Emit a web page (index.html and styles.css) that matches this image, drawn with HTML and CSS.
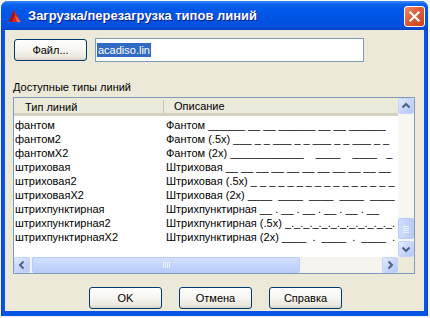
FILE: index.html
```html
<!DOCTYPE html>
<html>
<head>
  <title>Загрузка/перезагрузка типов линий</title>
  <meta charset="utf-8">
  <link rel="stylesheet" href="styles.css">
</head>
<body>
  <div class="window">
    <!-- Title bar -->
    <div class="titlebar">
      <svg class="app-icon" viewBox="0 0 14 14" width="14" height="14">
        <polygon points="1,13 6,1 13,13" fill="#d8261f"></polygon>
        <polygon points="1,13 6,1 7,6 4,13" fill="#a5120e"></polygon>
        <polygon points="7,6 13,13 9,13" fill="#f06a5a"></polygon>
      </svg>
      <span class="title">Загрузка/перезагрузка типов линий</span>
      <div class="close-btn">
        <svg viewBox="0 0 21 21" width="21" height="21">
          <path d="M6 6 L15 15 M15 6 L6 15" stroke="#fff" stroke-width="2.4" stroke-linecap="square"></path>
        </svg>
      </div>
    </div>

    <!-- Dialog body -->
    <div class="client">
      <div class="file-row">
        <div class="btn file-btn">Файл...</div>
        <div class="textbox"><span class="selected">acadiso.lin</span></div>
      </div>

      <div class="group-label">Доступные типы линий</div>

      <div class="listbox">
        <div class="list-main">
          <div class="list-content">
            <div class="list-header">
              <div class="hdr-cell first">Тип линий</div>
              <div class="hdr-cell">Описание</div>
            </div>
            <div class="list-rows">
              <div class="row"><span>фантом</span><span>Фантом ______ __ __ ______ __ __ ______</span></div>
              <div class="row"><span>фантом2</span><span>Фантом (.5x) ___ _ _ ___ _ _ ___ _ _ ___ _ _</span></div>
              <div class="row"><span>фантомX2</span><span>Фантом (2x) ____________    ____    ____   _</span></div>
              <div class="row"><span>штриховая</span><span>Штриховая __ __ __ __ __ __ __ __ __ __ __</span></div>
              <div class="row"><span>штриховая2</span><span>Штриховая (.5x) _ _ _ _ _ _ _ _ _ _ _ _ _ _ _ _</span></div>
              <div class="row"><span>штриховаяX2</span><span>Штриховая (2x) ____  ____  ____  ____  ____</span></div>
              <div class="row"><span>штрихпунктирная</span><span>Штрихпунктирная __ . __ . __ . __ . __ . __</span></div>
              <div class="row"><span>штрихпунктирная2</span><span>Штрихпунктирная (.5x) _._._._._._._._._._._._.</span></div>
              <div class="row"><span>штрихпунктирнаяX2</span><span>Штрихпунктирная (2x) ____  .  ____  .  ____  .</span></div>
            </div>
          </div>
          <!-- Vertical scrollbar -->
          <div class="vscroll">
            <div class="sb-btn">
              <svg viewBox="0 0 16 16" width="16" height="16"><path d="M4.5 9.5 L8 6 L11.5 9.5" class="chev"></path></svg>
            </div>
            <div class="vtrack">
              <div class="sb-thumb vthumb">
                <svg viewBox="0 0 14 8" width="14" height="8"><path d="M4 1.5h6M4 3.5h6M4 5.5h6M4 7.5h6" class="grip"></path></svg>
              </div>
            </div>
            <div class="sb-btn">
              <svg viewBox="0 0 16 16" width="16" height="16"><path d="M4.5 6.5 L8 10 L11.5 6.5" class="chev"></path></svg>
            </div>
          </div>
        </div>
        <!-- Horizontal scrollbar -->
        <div class="hscroll">
          <div class="sb-btn">
            <svg viewBox="0 0 16 16" width="16" height="16"><path d="M9.5 4.5 L6 8 L9.5 11.5" class="chev"></path></svg>
          </div>
          <div class="htrack">
            <div class="sb-thumb hthumb">
              <svg viewBox="0 0 8 14" width="8" height="14"><path d="M1.5 4v6M3.5 4v6M5.5 4v6M7.5 4v6" class="grip"></path></svg>
            </div>
          </div>
          <div class="sb-btn">
            <svg viewBox="0 0 16 16" width="16" height="16"><path d="M6.5 4.5 L10 8 L6.5 11.5" class="chev"></path></svg>
          </div>
          <div class="sb-corner"></div>
        </div>
      </div>

      <div class="button-row">
        <div class="btn">OK</div>
        <div class="btn">Отмена</div>
        <div class="btn">Справка</div>
      </div>
    </div>
  </div>
</body>
</html>
```

FILE: styles.css
```css
/* Base */
html, body {
  margin: 0;
  padding: 0;
  background: #f4f4f4;
  font-family: "Liberation Sans", Arial, sans-serif;
  font-size: 11px;
  color: #000;
}
/* Window frame */
.window {
  margin: 1px 0 0 1px;
  width: 427px;
  height: 315px;
  background: linear-gradient(90deg, #0a3fd0 0, #0855e6 2px, #0855e6 calc(100% - 2px), #0a3fd0 100%);
  border-radius: 7px 7px 0 0;
  display: flex;
  flex-direction: column;
  overflow: hidden;
}
.titlebar {
  height: 29px;
  flex-shrink: 0;
  display: flex;
  align-items: center;
  padding: 0 3px 0 7px;
  background: linear-gradient(#3d8ff7 0, #0f64ee 3px, #0258e8 8px, #0055e5 50%, #0350e0 85%, #0243c9 100%);
}
.app-icon {
  flex-shrink: 0;
  margin-top: 1px;
}
.title {
  flex: 1;
  margin-left: 6px;
  color: #fff;
  font-family: "Liberation Sans", Arial, sans-serif;
  font-weight: bold;
  font-size: 13px;
  text-shadow: 1px 1px #0a1a8a;
  white-space: nowrap;
}
.close-btn {
  width: 21px;
  height: 21px;
  margin-top: 2px;
  box-sizing: border-box;
  border: 1px solid #fff;
  border-radius: 3px;
  background: linear-gradient(135deg, #f08c6c 0, #e2603c 40%, #c9401c 100%);
  display: flex;
  align-items: center;
  justify-content: center;
}
.close-btn svg {
  width: 19px;
  height: 19px;
}
/* Client area */
.client {
  flex: 1;
  margin: 0 4px 5px 4px;
  background: #ece9d8;
  display: flex;
  flex-direction: column;
}
.btn {
  box-sizing: border-box;
  width: 73px;
  height: 22px;
  border: 1px solid #003c74;
  border-radius: 3px;
  background: linear-gradient(#ffffff 0, #f6f5f0 50%, #ebe8dd 85%, #d8d2c4 100%);
  display: flex;
  align-items: center;
  justify-content: center;
}
.file-row {
  display: flex;
  align-items: center;
  height: 24px;
  margin-top: 8px;
  padding-left: 9px;
}
.textbox {
  box-sizing: border-box;
  width: 269px;
  height: 24px;
  margin-left: 8px;
  border: 1px solid #7f9db9;
  background: #fff;
  display: flex;
  align-items: center;
  padding-left: 1px;
}
.selected {
  background: #316ac5;
  color: #fff;
  padding: 1px 1px;
}
.group-label {
  margin: 19px 0 0 8px;
  height: 13px;
  line-height: 13px;
}
/* List view */
.listbox {
  box-sizing: border-box;
  margin: 3px 0 0 8px;
  width: 402px;
  height: 177px;
  border: 1px solid #7f9db9;
  background: #fff;
  display: flex;
  flex-direction: column;
}
.list-main {
  flex: 1;
  display: flex;
  min-height: 0;
}
.list-content {
  flex: 1;
  overflow: hidden;
}
.list-header {
  display: grid;
  grid-template-columns: 150px 1fr;
  height: 18px;
  box-sizing: border-box;
  background: #ebeadb;
  border-bottom: 3px solid;
  border-image: linear-gradient(#e2decd 0, #e2decd 33%, #cbc7b8 33%, #cbc7b8 66%, #d6d2c2 66%) 1;
}
.hdr-cell {
  display: flex;
  align-items: center;
  padding-left: 10px;
  color: #000;
}
.hdr-cell.first {
  padding-left: 11px;
  border-right: 1px solid #c7c5b2;
  margin: 2px 0 0;
}
.list-rows {
  padding-top: 2px;
}
.row {
  display: grid;
  grid-template-columns: 150px 1fr;
  height: 14px;
  line-height: 14px;
  white-space: pre;
}
.row span {
  overflow: hidden;
  padding-left: 1px;
}
.row span + span {
  padding-left: 2px;
}
/* Scrollbars */
.vscroll {
  width: 16px;
  flex-shrink: 0;
  display: flex;
  flex-direction: column;
  background: #f7f6f1;
}
.vtrack {
  flex: 1;
  display: flex;
  flex-direction: column;
  justify-content: flex-end;
  padding-bottom: 2px;
}
.hscroll {
  height: 16px;
  flex-shrink: 0;
  display: flex;
  background: #f4f3ee;
}
.htrack {
  flex: 1;
  display: flex;
  padding-left: 2px;
}
.sb-btn {
  width: 16px;
  height: 16px;
  flex-shrink: 0;
  box-sizing: border-box;
  border: 1px solid #c3d3fd;
  border-radius: 2px;
  background: linear-gradient(135deg, #e2ebfe 0, #c8d8fc 50%, #b4c8f6 100%);
}
.sb-btn svg {
  display: block;
  margin: -1px;
}
.chev {
  fill: none;
  stroke: #4d6185;
  stroke-width: 2;
}
.sb-thumb {
  box-sizing: border-box;
  border: 1px solid #b8cbf7;
  border-radius: 2px;
  background: linear-gradient(90deg, #cfdcfd 0, #c2d4fc 50%, #b8cbf8 100%);
  display: flex;
  align-items: center;
  justify-content: center;
}
.vthumb {
  height: 21px;
  width: 16px;
}
.hthumb {
  width: 268px;
  height: 16px;
  background: linear-gradient(#d3dffd 0, #c5d6fc 50%, #b9ccf8 100%);
}
.grip {
  fill: none;
  stroke: #eef3fe;
  stroke-width: 1;
}
.sb-corner {
  width: 16px;
  background: #ece9d8;
}
/* Bottom buttons */
.button-row {
  display: flex;
  gap: 17px;
  margin: 13px 0 0 84px;
}
```
